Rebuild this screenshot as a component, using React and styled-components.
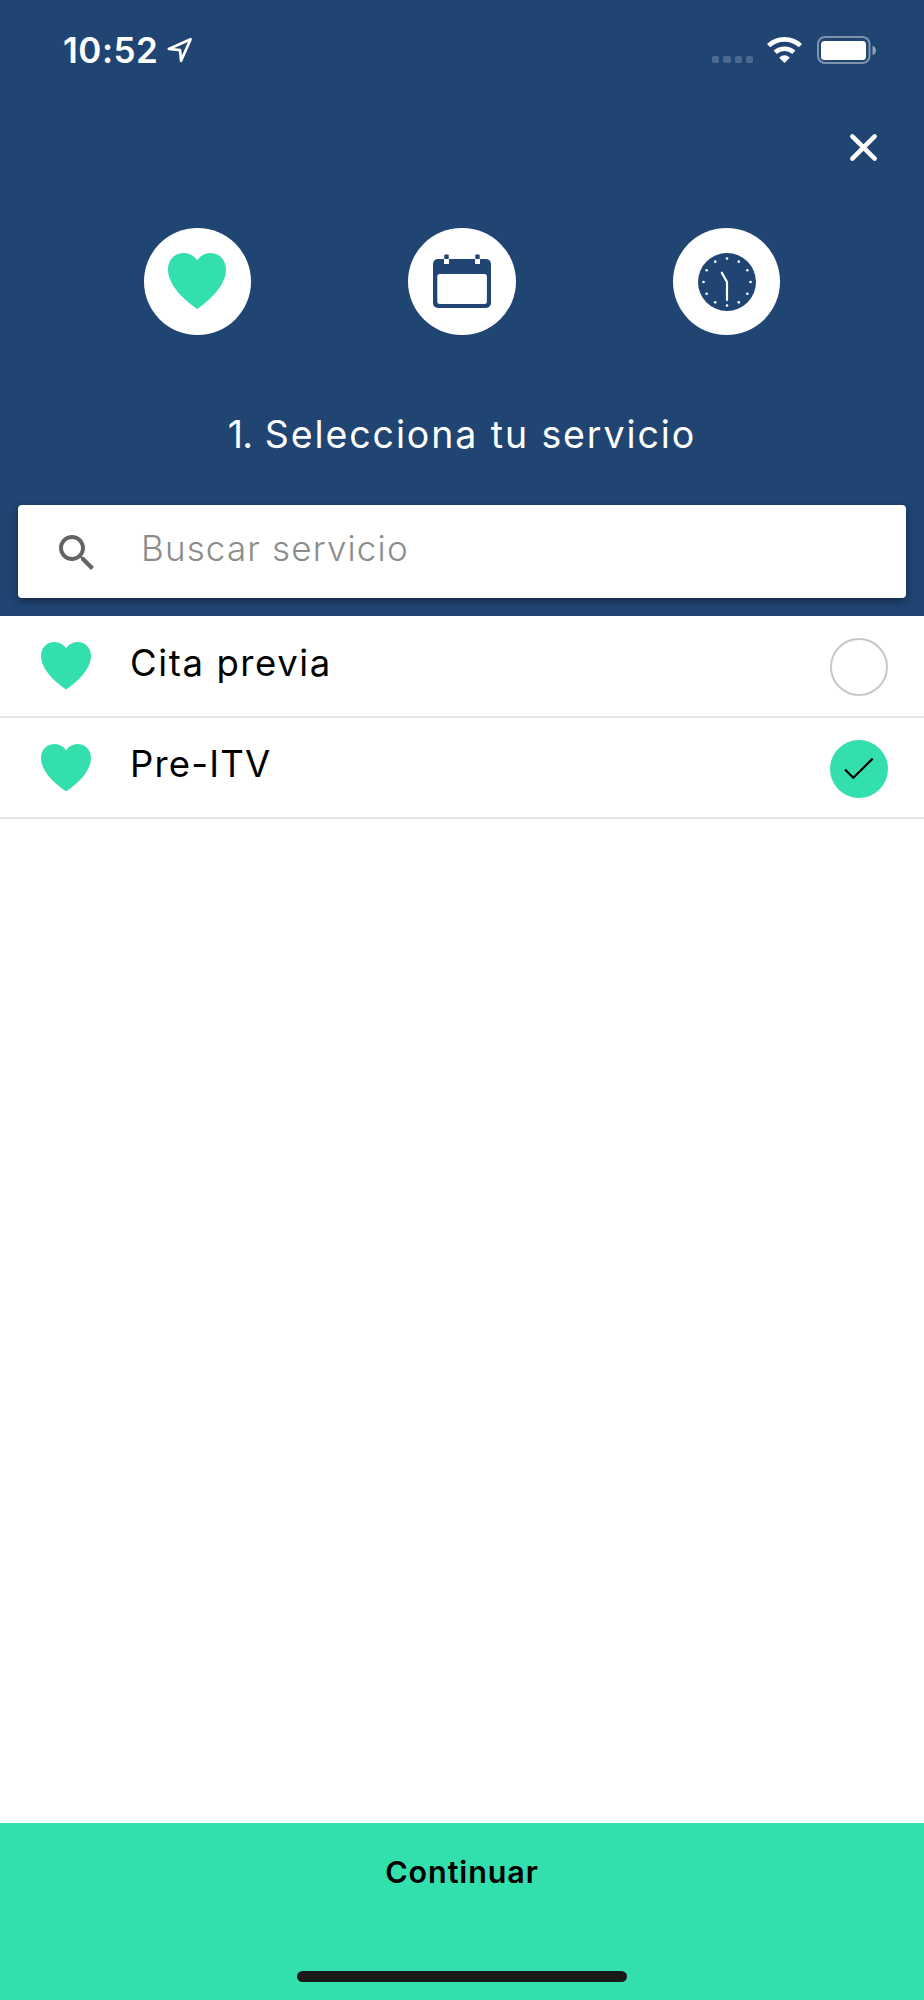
import React from "react";
import styled, { createGlobalStyle } from "styled-components";

const NAVY = "#204573";
const GREEN = "#33dfad";

const GlobalStyle = createGlobalStyle`
  *, *::before, *::after { box-sizing: border-box; }
  body { margin: 0; background: #fff; }
  button, input { font: inherit; border: 0; background: none; padding: 0; margin: 0; }
`;

const Screen = styled.div`
  display: flex;
  flex-direction: column;
  width: 924px;
  height: 2000px;
  overflow: hidden;
  background: #fff;
  color: #000;
  font-family: Inter, "Liberation Sans", sans-serif;
  font-weight: 300;
`;

const Header = styled.header`
  height: 616px;
  flex: none;
  display: flex;
  flex-direction: column;
  background: ${NAVY};
  color: #fff;
`;

const StatusBar = styled.div`
  height: 100px;
  padding: 0 47px 0 63px;
  display: flex;
  justify-content: space-between;
`;

const Clock = styled.div`
  display: flex;
  align-items: flex-start;
  gap: 9px;
  padding-top: 29px;
  font: 600 35px/42px Inter, sans-serif;
  letter-spacing: 0.5px;
  svg { margin-top: 8px; }
`;

const Indicators = styled.div`
  display: flex;
  align-items: flex-start;
  padding-top: 36px;
`;

const Signal = styled.div`
  display: flex;
  gap: 4px;
  margin: 20px 13px 0 0;
`;

const SignalDot = styled.i`
  width: 7.2px;
  height: 7.2px;
  border-radius: 2px;
  background: rgba(255, 255, 255, 0.2);
`;

const Battery = styled.svg`
  margin-left: 14px;
`;

const CloseRow = styled.div`
  height: 128px;
  padding: 32px 45px 0;
  display: flex;
  justify-content: flex-end;
  align-items: flex-start;
`;

const CloseButton = styled.button`
  width: 31px;
  height: 31px;
  display: flex;
`;

const Steps = styled.div`
  height: 107px;
  padding: 0 143.5px;
  display: flex;
  justify-content: space-between;
`;

const Step = styled.div`
  width: 107.4px;
  height: 107px;
  border-radius: 50%;
  background: #fff;
  display: flex;
  align-items: center;
  justify-content: center;
  svg { margin-bottom: ${(p) => p.$lift || "0"}; }
`;

const Title = styled.h1`
  margin: 76px 0 0;
  height: 94px;
  text-align: center;
  font-size: 37.5px;
  line-height: 48px;
  font-weight: 400;
  letter-spacing: 1.9px;
`;

const StepNumber = styled.span`
  letter-spacing: -0.8px;
`;

const SearchBox = styled.label`
  height: 93px;
  margin: 0 18px;
  padding: 0 53px 0 35px;
  display: flex;
  align-items: center;
  border-radius: 4px;
  background: #fff;
  box-shadow: 0 3px 8px rgba(0, 0, 0, 0.4);
  svg { margin-top: 2px; }
`;

const SearchInput = styled.input`
  flex: 1;
  height: 60px;
  margin: -8px 0 0 40px;
  outline: none;
  font-size: 35px;
  letter-spacing: 1.15px;
  &::placeholder { color: #8c8c8c; opacity: 1; }
`;

const List = styled.ul`
  flex: 1;
  margin: 0;
  padding: 0;
  list-style: none;
`;

const Item = styled.li`
  height: 101px;
  padding: 0 36px 0 41px;
  display: flex;
  align-items: center;
  border-bottom: 2px solid #e6e6e6;
  &:first-child { height: 102px; }
`;

const ItemLabel = styled.span`
  flex: 1;
  margin: -7px 0 0 39px;
  font-size: 36.5px;
  line-height: 46px;
  font-weight: 400;
  letter-spacing: ${(p) => p.$spacing};
`;

const Radio = styled.span`
  width: 58px;
  height: 58px;
  margin-top: 2px;
  border-radius: 50%;
  display: flex;
  align-items: center;
  justify-content: center;
  border: ${(p) => (p.$checked ? "0" : "2px solid #c7c7cc")};
  background: ${(p) => (p.$checked ? GREEN : "#fff")};
`;

const Footer = styled.footer`
  height: 177px;
  flex: none;
  display: flex;
  flex-direction: column;
  align-items: center;
  justify-content: space-between;
  padding: 29px 0 18px;
  background: ${GREEN};
`;

const ContinueButton = styled.button`
  font-size: 30.5px;
  line-height: 40px;
  font-weight: 600;
  letter-spacing: 0.9px;
  color: #000;
`;

const HomeIndicator = styled.div`
  width: 330px;
  height: 11px;
  border-radius: 6px;
  background: #191919;
`;

function Heart({ width, height }) {
  return (
    <svg width={width} height={height} viewBox="0 0 175 168" preserveAspectRatio="none" fill={GREEN}>
      <path d="M88 22C78 8 64 0 48 0C20 0 0 21 0 49C0 98 50 142 88 168C126 142 175 98 175 49C175 21 155 0 127 0C111 0 98 8 88 22Z" />
    </svg>
  );
}

function CalendarIcon() {
  return (
    <svg width="58" height="54" viewBox="0 0 58 54">
      <rect y="5" width="58" height="49" rx="5" fill={NAVY} />
      <rect x="4.3" y="20" width="49.6" height="30" rx="2.5" fill="#fff" />
      <path d="M11 5h5v5h-5zM42 5h5v5h-5z" fill="#fff" />
      <path d="M11.3 5V1.3Q11.3.5 12.1.5h2.8q.8 0 .8.8V5zM42.3 5V1.3q0-.8.8-.8h2.8q.8 0 .8.8V5z" fill={NAVY} />
    </svg>
  );
}

function ClockIcon() {
  const marks = Array.from({ length: 12 }, (_, i) => (i * Math.PI) / 6);
  return (
    <svg width="58" height="58" viewBox="-29 -29 58 58">
      <circle r="29" fill={NAVY} />
      {marks.map((a) => (
        <circle key={a} cx={23.5 * Math.sin(a)} cy={-23.5 * Math.cos(a)} r="1.3" fill="#fff" />
      ))}
      <path d="M-5.2-9.3L0 0V18" fill="none" stroke="#fff" strokeWidth="2.2" strokeLinecap="round" strokeLinejoin="round" />
    </svg>
  );
}

const services = [
  { name: "Cita previa", checked: false, spacing: "1.6px" },
  { name: "Pre-ITV", checked: true, spacing: "1.2px" },
];

export default function App() {
  return (
    <Screen>
      <GlobalStyle />
      <Header>
        <StatusBar>
          <Clock>
            10:52
            <svg width="26" height="26" viewBox="0 0 26 26" fill="none" stroke="#fff" strokeWidth="2.7" strokeLinejoin="round">
              <path d="M23.6 2.2L1.8 11.9L13 13.1L14.1 23.8Z" />
            </svg>
          </Clock>
          <Indicators>
            <Signal>
              <SignalDot />
              <SignalDot />
              <SignalDot />
              <SignalDot />
            </Signal>
            <svg width="37" height="28" viewBox="-55.5 -80 111 84">
              <path d="M0 1L-16-15Q0-29 16-15Z" fill="#fff" />
              <path d="M-47.7-51.2A70 70 0 0 1 47.7-51.2M-28-31A42 42 0 0 1 28-31" fill="none" stroke="#fff" strokeWidth="14" />
            </svg>
            <Battery width="60" height="28" viewBox="0 0 60 28">
              <rect x="1" y="1" width="51.5" height="26" rx="7" fill="none" stroke="#fff" strokeOpacity=".42" strokeWidth="2" />
              <rect x="4" y="5" width="45" height="19" rx="3.5" fill="#fff" />
              <path d="M55.5 9.7Q59 11 59 14.4T55.5 19Z" fill="#fff" fillOpacity=".5" />
            </Battery>
          </Indicators>
        </StatusBar>
        <CloseRow>
          <CloseButton aria-label="Cerrar">
            <svg width="31" height="31" viewBox="0 0 31 31" stroke="#fff" strokeWidth="4.5" strokeLinecap="round">
              <path d="M4.3 4.3L26.7 26.7M26.7 4.3L4.3 26.7" />
            </svg>
          </CloseButton>
        </CloseRow>
        <Steps>
          <Step $lift="1px"><Heart width={58} height={56} /></Step>
          <Step $lift="1px"><CalendarIcon /></Step>
          <Step><ClockIcon /></Step>
        </Steps>
        <Title><StepNumber>1.</StepNumber> Selecciona tu servicio</Title>
        <SearchBox>
          <svg width="48" height="48" viewBox="0 0 24 24" fill="#646464">
            <path d="M15.5 14h-.79l-.28-.27C15.41 12.59 16 11.11 16 9.5 16 5.91 13.09 3 9.5 3S3 5.91 3 9.5 5.91 16 9.5 16c1.61 0 3.09-.59 4.23-1.57l.27.28v.79l5 4.99L20.49 19l-4.99-5zm-6 0C7.01 14 5 11.99 5 9.5S7.01 5 9.5 5 14 7.01 14 9.5 11.99 14 9.5 14z" />
          </svg>
          <SearchInput placeholder="Buscar servicio" />
        </SearchBox>
      </Header>
      <List>
        {services.map((s) => (
          <Item key={s.name}>
            <Heart width={50} height={47.5} />
            <ItemLabel $spacing={s.spacing}>{s.name}</ItemLabel>
            <Radio $checked={s.checked}>
              {s.checked && (
                <svg width="32" height="24" viewBox="0 0 32 24" fill="none" stroke="#000" strokeWidth="2.2">
                  <path d="M2 12.5L10.3 20.8L29.7 1.6" />
                </svg>
              )}
            </Radio>
          </Item>
        ))}
      </List>
      <Footer>
        <ContinueButton>Continuar</ContinueButton>
        <HomeIndicator />
      </Footer>
    </Screen>
  );
}
